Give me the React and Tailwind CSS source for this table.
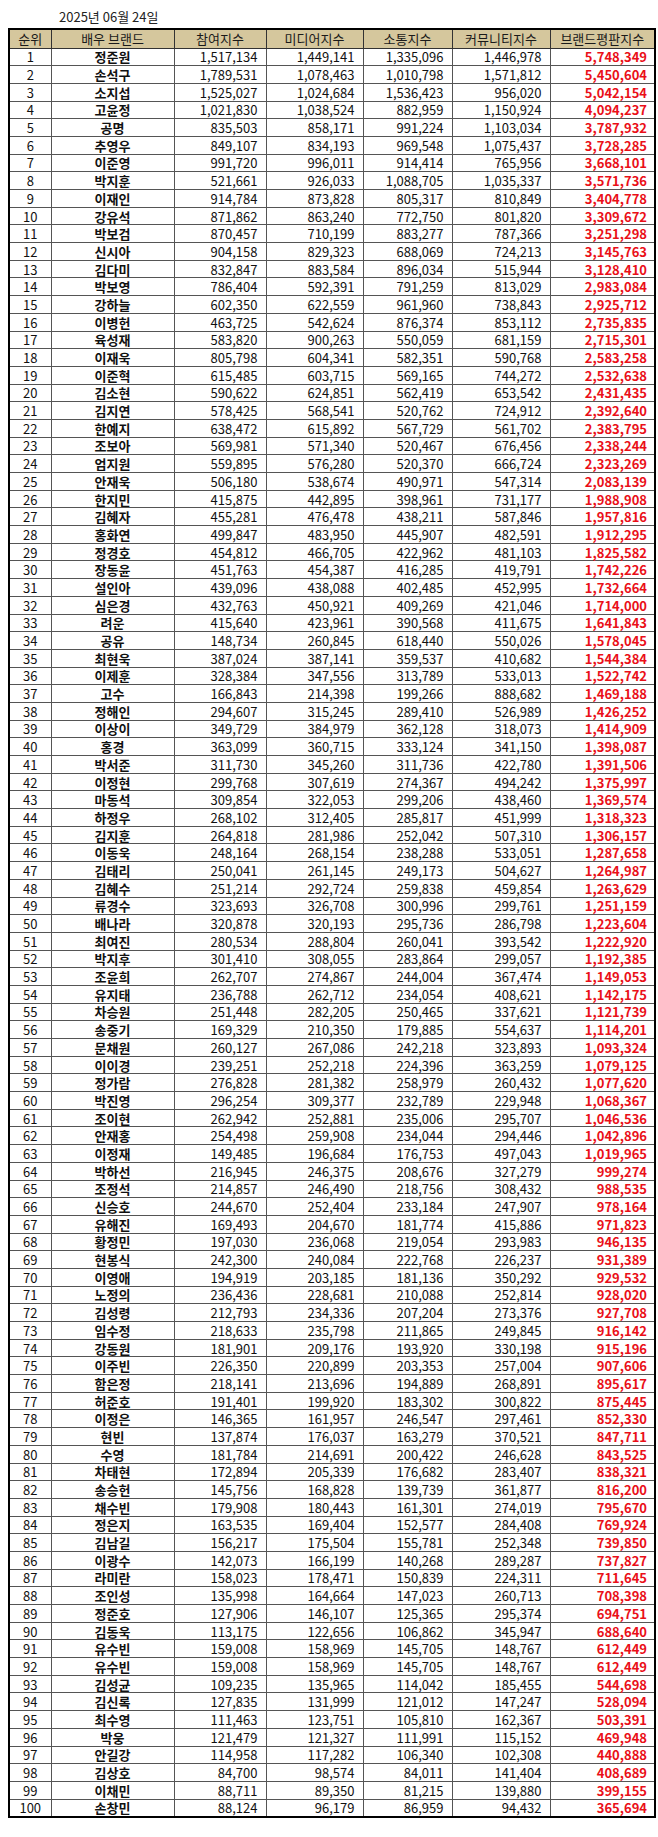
const raw = `정준원 1,517,134 1,449,141 1,335,096 1,446,978 5,748,349
손석구 1,789,531 1,078,463 1,010,798 1,571,812 5,450,604
소지섭 1,525,027 1,024,684 1,536,423 956,020 5,042,154
고윤정 1,021,830 1,038,524 882,959 1,150,924 4,094,237
공명 835,503 858,171 991,224 1,103,034 3,787,932
추영우 849,107 834,193 969,548 1,075,437 3,728,285
이준영 991,720 996,011 914,414 765,956 3,668,101
박지훈 521,661 926,033 1,088,705 1,035,337 3,571,736
이재인 914,784 873,828 805,317 810,849 3,404,778
강유석 871,862 863,240 772,750 801,820 3,309,672
박보검 870,457 710,199 883,277 787,366 3,251,298
신시아 904,158 829,323 688,069 724,213 3,145,763
김다미 832,847 883,584 896,034 515,944 3,128,410
박보영 786,404 592,391 791,259 813,029 2,983,084
강하늘 602,350 622,559 961,960 738,843 2,925,712
이병헌 463,725 542,624 876,374 853,112 2,735,835
육성재 583,820 900,263 550,059 681,159 2,715,301
이재욱 805,798 604,341 582,351 590,768 2,583,258
이준혁 615,485 603,715 569,165 744,272 2,532,638
김소현 590,622 624,851 562,419 653,542 2,431,435
김지연 578,425 568,541 520,762 724,912 2,392,640
한예지 638,472 615,892 567,729 561,702 2,383,795
조보아 569,981 571,340 520,467 676,456 2,338,244
엄지원 559,895 576,280 520,370 666,724 2,323,269
안재욱 506,180 538,674 490,971 547,314 2,083,139
한지민 415,875 442,895 398,961 731,177 1,988,908
김혜자 455,281 476,478 438,211 587,846 1,957,816
홍화연 499,847 483,950 445,907 482,591 1,912,295
정경호 454,812 466,705 422,962 481,103 1,825,582
장동윤 451,763 454,387 416,285 419,791 1,742,226
설인아 439,096 438,088 402,485 452,995 1,732,664
심은경 432,763 450,921 409,269 421,046 1,714,000
려운 415,640 423,961 390,568 411,675 1,641,843
공유 148,734 260,845 618,440 550,026 1,578,045
최현욱 387,024 387,141 359,537 410,682 1,544,384
이제훈 328,384 347,556 313,789 533,013 1,522,742
고수 166,843 214,398 199,266 888,682 1,469,188
정해인 294,607 315,245 289,410 526,989 1,426,252
이상이 349,729 384,979 362,128 318,073 1,414,909
홍경 363,099 360,715 333,124 341,150 1,398,087
박서준 311,730 345,260 311,736 422,780 1,391,506
이정현 299,768 307,619 274,367 494,242 1,375,997
마동석 309,854 322,053 299,206 438,460 1,369,574
하정우 268,102 312,405 285,817 451,999 1,318,323
김지훈 264,818 281,986 252,042 507,310 1,306,157
이동욱 248,164 268,154 238,288 533,051 1,287,658
김태리 250,041 261,145 249,173 504,627 1,264,987
김혜수 251,214 292,724 259,838 459,854 1,263,629
류경수 323,693 326,708 300,996 299,761 1,251,159
배나라 320,878 320,193 295,736 286,798 1,223,604
최여진 280,534 288,804 260,041 393,542 1,222,920
박지후 301,410 308,055 283,864 299,057 1,192,385
조윤희 262,707 274,867 244,004 367,474 1,149,053
유지태 236,788 262,712 234,054 408,621 1,142,175
차승원 251,448 282,205 250,465 337,621 1,121,739
송중기 169,329 210,350 179,885 554,637 1,114,201
문채원 260,127 267,086 242,218 323,893 1,093,324
이이경 239,251 252,218 224,396 363,259 1,079,125
정가람 276,828 281,382 258,979 260,432 1,077,620
박진영 296,254 309,377 232,789 229,948 1,068,367
조이현 262,942 252,881 235,006 295,707 1,046,536
안재홍 254,498 259,908 234,044 294,446 1,042,896
이정재 149,485 196,684 176,753 497,043 1,019,965
박하선 216,945 246,375 208,676 327,279 999,274
조정석 214,857 246,490 218,756 308,432 988,535
신승호 244,670 252,404 233,184 247,907 978,164
유해진 169,493 204,670 181,774 415,886 971,823
황정민 197,030 236,068 219,054 293,983 946,135
현봉식 242,300 240,084 222,768 226,237 931,389
이영애 194,919 203,185 181,136 350,292 929,532
노정의 236,436 228,681 210,088 252,814 928,020
김성령 212,793 234,336 207,204 273,376 927,708
임수정 218,633 235,798 211,865 249,845 916,142
강동원 181,901 209,176 193,920 330,198 915,196
이주빈 226,350 220,899 203,353 257,004 907,606
함은정 218,141 213,696 194,889 268,891 895,617
허준호 191,401 199,920 183,302 300,822 875,445
이정은 146,365 161,957 246,547 297,461 852,330
현빈 137,874 176,037 163,279 370,521 847,711
수영 181,784 214,691 200,422 246,628 843,525
차태현 172,894 205,339 176,682 283,407 838,321
송승헌 145,756 168,828 139,739 361,877 816,200
채수빈 179,908 180,443 161,301 274,019 795,670
정은지 163,535 169,404 152,577 284,408 769,924
김남길 156,217 175,504 155,781 252,348 739,850
이광수 142,073 166,199 140,268 289,287 737,827
라미란 158,023 178,471 150,839 224,311 711,645
조인성 135,998 164,664 147,023 260,713 708,398
정준호 127,906 146,107 125,365 295,374 694,751
김동욱 113,175 122,656 106,862 345,947 688,640
유수빈 159,008 158,969 145,705 148,767 612,449
유수빈 159,008 158,969 145,705 148,767 612,449
김성균 109,235 135,965 114,042 185,455 544,698
김신록 127,835 131,999 121,012 147,247 528,094
최수영 111,463 123,751 105,810 162,367 503,391
박웅 121,479 121,327 111,991 115,152 469,948
안길강 114,958 117,282 106,340 102,308 440,888
김상호 84,700 98,574 84,011 141,404 408,689
이채민 88,711 89,350 81,215 139,880 399,155
손창민 88,124 96,179 86,959 94,432 365,694`

const rows = raw.split('\n').map((line) => line.trim().split(' '))

const headers = ['순위', '배우 브랜드', '참여지수', '미디어지수', '소통지수', '커뮤니티지수', '브랜드평판지수']

export default function App() {
  return (
    <div className="w-[658px] h-[1837px] bg-white font-['Noto_Sans_CJK_KR','Noto_Sans',sans-serif] text-[13px] text-[#111]">
      <div className="h-[28px] pt-[8px] pl-[59px] leading-[18px] text-[#222]">2025년 06월 24일</div>

      <table className="ml-[8px] w-[646px] table-fixed border-collapse border-2 border-black">
        <colgroup>
          <col className="w-[42px]" />
          <col className="w-[123px]" />
          <col className="w-[92px]" />
          <col className="w-[97px]" />
          <col className="w-[89px]" />
          <col className="w-[98px]" />
          <col className="w-[105px]" />
        </colgroup>
        <thead>
          <tr className="h-[19px] bg-[#d5c79d]">
            {headers.map((h) => (
              <th key={h} className="border border-[#333] p-0 text-center font-normal leading-[15px] text-[#1a1a1a]">
                {h}
              </th>
            ))}
          </tr>
        </thead>
        <tbody>
          {rows.map((r, i) => (
            <tr key={i} className="h-[17.7px]">
              <td className="border border-[#555] p-0 text-center leading-[15px]">{i + 1}</td>
              <td className="border border-[#555] p-0 text-center font-bold leading-[15px]">{r[0]}</td>
              <td className="border border-[#555] p-0 pr-[8px] text-right leading-[15px]">{r[1]}</td>
              <td className="border border-[#555] p-0 pr-[8px] text-right leading-[15px]">{r[2]}</td>
              <td className="border border-[#555] p-0 pr-[8px] text-right leading-[15px]">{r[3]}</td>
              <td className="border border-[#555] p-0 pr-[8px] text-right leading-[15px]">{r[4]}</td>
              <td className="border border-[#555] p-0 pr-[7px] text-right font-bold leading-[15px] text-[#ea0f18]">{r[5]}</td>
            </tr>
          ))}
        </tbody>
      </table>
    </div>
  )
}
